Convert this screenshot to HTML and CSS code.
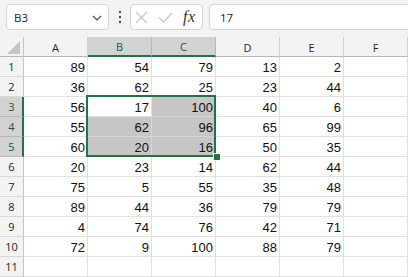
FILE: index.html
```html
<!DOCTYPE html>
<html>
<head>
<meta charset="utf-8">
<link rel="stylesheet" href="styles.css">
</head>
<body>
<div class="toolbar">
  <div class="namebox">
    <span class="name">B3</span>
    <svg class="chev" width="10" height="6" viewBox="0 0 10 6"><path d="M1 1 L5 5 L9 1" fill="none" stroke="#444" stroke-width="1.1"/></svg>
  </div>
  <div class="dots"><span></span><span></span><span></span></div>
  <div class="fxbox">
    <svg width="13" height="13" viewBox="0 0 13 13"><path d="M1 1 L12 12 M12 1 L1 12" stroke="#c4c4c4" stroke-width="1.1" fill="none"/></svg>
    <svg width="15" height="11" viewBox="0 0 15 11"><path d="M1 5.5 L5.5 10 L14 1" stroke="#c4c4c4" stroke-width="1.1" fill="none"/></svg>
    <span class="fx">fx</span>
  </div>
  <div class="formula"><span>17</span></div>
</div>
<div class="sheet">
  <div class="corner"><svg width="14" height="14" viewBox="0 0 14 14"><path d="M13 0 L13 13 L0 13 Z" fill="#c6c6c6"/></svg></div>
  <div class="ch">A</div><div class="ch on">B</div><div class="ch on">C</div><div class="ch">D</div><div class="ch">E</div><div class="ch">F</div>

  <div class="rh">1</div><div class="c">89</div><div class="c">54</div><div class="c">79</div><div class="c">13</div><div class="c">2</div><div class="c"></div>
  <div class="rh">2</div><div class="c">36</div><div class="c">62</div><div class="c">25</div><div class="c">23</div><div class="c">44</div><div class="c"></div>
  <div class="rh on">3</div><div class="c">56</div><div class="c">17</div><div class="c s">100</div><div class="c">40</div><div class="c">6</div><div class="c"></div>
  <div class="rh on">4</div><div class="c">55</div><div class="c s">62</div><div class="c s">96</div><div class="c">65</div><div class="c">99</div><div class="c"></div>
  <div class="rh on">5</div><div class="c">60</div><div class="c s">20</div><div class="c s">16</div><div class="c">50</div><div class="c">35</div><div class="c"></div>
  <div class="rh">6</div><div class="c">20</div><div class="c">23</div><div class="c">14</div><div class="c">62</div><div class="c">44</div><div class="c"></div>
  <div class="rh">7</div><div class="c">75</div><div class="c">5</div><div class="c">55</div><div class="c">35</div><div class="c">48</div><div class="c"></div>
  <div class="rh">8</div><div class="c">89</div><div class="c">44</div><div class="c">36</div><div class="c">79</div><div class="c">79</div><div class="c"></div>
  <div class="rh">9</div><div class="c">4</div><div class="c">74</div><div class="c">76</div><div class="c">42</div><div class="c">71</div><div class="c"></div>
  <div class="rh">10</div><div class="c">72</div><div class="c">9</div><div class="c">100</div><div class="c">88</div><div class="c">79</div><div class="c"></div>
  <div class="rh">11</div><div class="c"></div><div class="c"></div><div class="c"></div><div class="c"></div><div class="c"></div><div class="c"></div>

  <div class="selection"></div>
  <div class="handle"></div>
</div>
</body>
</html>
```

FILE: styles.css
```css
* { box-sizing: border-box; }
html, body { margin: 0; padding: 0; }
body {
  width: 408px;
  height: 277px;
  overflow: hidden;
  background: #f3f3f3;
  font-family: "Open Sans", "Noto Sans", sans-serif;
}
.toolbar {
  height: 37px;
  display: flex;
  align-items: flex-start;
  padding: 4px 0 0 6px;
  overflow: hidden;
}
.namebox {
  width: 103px;
  height: 26px;
  background: #fff;
  border: 1px solid #d4d4d4;
  border-radius: 4px;
  display: flex;
  align-items: center;
  justify-content: space-between;
  padding: 0 6px 0 7px;
}
.name, .formula span {
  font-size: 11.5px;
  color: #222;
}
.chev { margin-top: 1px; }
.dots {
  width: 21px;
  height: 26px;
  display: flex;
  flex-direction: column;
  align-items: center;
  justify-content: center;
  gap: 3px;
}
.dots span {
  width: 2px;
  height: 2px;
  background: #444;
}
.fxbox {
  width: 73px;
  height: 26px;
  background: #fff;
  border: 1px solid #d4d4d4;
  border-radius: 4px;
  display: flex;
  align-items: center;
  padding: 0 0 0 4px;
  gap: 10px;
}
.fx {
  font-family: "Liberation Serif", serif;
  font-style: italic;
  font-size: 16px;
  color: #333;
  margin-left: 0px;
  letter-spacing: 0.5px;
}
.formula {
  flex: 1;
  margin-left: 6px;
  margin-right: -10px;
  height: 26px;
  background: #fff;
  border: 1px solid #d4d4d4;
  border-radius: 4px;
  display: flex;
  align-items: center;
  padding-left: 10px;
}
.sheet {
  position: relative;
  display: grid;
  grid-template-columns: 24px repeat(6, 64px);
  grid-auto-rows: 20px;
  background: #fff;
}
.corner, .ch, .rh {
  background: #f3f3f3;
  color: #262626;
  font-size: 11px;
}
.corner {
  border-right: 1px solid #c6c6c6;
  border-bottom: 1px solid #b8b8b8;
  padding: 4px 0 0 7px;
}
.corner svg { display: block; }
.ch {
  border-right: 1px solid #d0d0d0;
  border-bottom: 1px solid #b8b8b8;
  display: flex;
  align-items: center;
  justify-content: center;
  padding-top: 1px;
}
.ch.on {
  background: #d2d2d2;
  color: #185c37;
  border-right-color: #b8b8b8;
  border-bottom: 2px solid #217346;
}
.rh {
  border-right: 1px solid #c6c6c6;
  border-bottom: 1px solid #d8d8d8;
  display: flex;
  align-items: center;
  justify-content: center;
}
.rh.on {
  background: #d2d2d2;
  color: #185c37;
  border-right: 2px solid #217346;
  border-bottom-color: #b8b8b8;
  padding-left: 1px;
}
.c {
  border-right: 1px solid #e1e1e1;
  border-bottom: 1px solid #e1e1e1;
  font-family: "Liberation Sans", Arial, sans-serif;
  font-size: 13px;
  color: #111;
  text-align: right;
  padding: 2px 2px 0 0;
  line-height: 17px;
}
.c.s {
  background: #c6c6c6;
  border-color: #d6d6d6;
}
.selection {
  position: absolute;
  left: 86px;
  top: 58px;
  width: 130px;
  height: 62px;
  border: 2px solid #217346;
  pointer-events: none;
}
.handle {
  position: absolute;
  left: 213px;
  top: 116px;
  width: 6px;
  height: 6px;
  background: #217346;
  border: 1px solid #fff;
  box-sizing: content-box;
}
```
